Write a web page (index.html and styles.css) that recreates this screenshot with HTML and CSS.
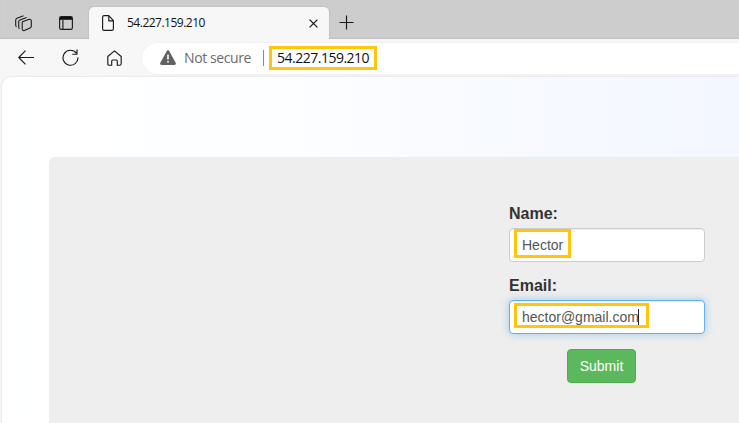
FILE: index.html
```html
<!DOCTYPE html>
<html lang="en">
<head>
<meta charset="utf-8">
<title>54.227.159.210</title>
<link rel="stylesheet" href="styles.css">
</head>
<body>
<div class="browser">
  <header class="tabs">
    <svg class="icon workspaces" width="18" height="18" viewBox="0 0 18 18"><path d="M7.5 6.7 14.2 4.2Q16.3 4 16.3 6V11.2Q16.2 12.5 15 13L9.4 15.5Q7.5 16 7.2 14V8Q7.2 7.2 7.5 6.7ZM4.5 13.8Q3.7 13.3 3.7 12V6.7Q3.7 5.4 5 4.9L11.5 2.4M1.5 11.8Q.7 11.2.7 10V5.1Q.7 3.8 2 3.2L8.5.8"/></svg>
    <svg class="icon tab-menu" width="14" height="14" viewBox="0 0 14 14"><path d="M2.3.6h9.4q1.7 0 1.7 1.7v9.4q0 1.7-1.7 1.7H2.3Q.6 13.4.6 11.7V2.3Q.6.6 2.3.6ZM3.9 4v9"/><path class="solid" d="M1 1h12v2.8H1z"/></svg>
    <div class="tab">
      <svg class="icon page-icon" width="12" height="16" viewBox="0 0 12 16"><path d="M2.1.6h4.7l4.6 5v8.1q0 1.7-1.7 1.7H2.1Q.6 15.4.6 13.7V2.2Q.6.6 2.1.6ZM6.8.8v5h4.4"/></svg>
      <span class="tab-title">54.227.159.210</span>
      <svg class="icon close" width="9" height="9" viewBox="0 0 9 9"><path d="M.6.6 8.4 8.4M8.4.6.6 8.4"/></svg>
    </div>
    <svg class="icon plus" width="15" height="15" viewBox="0 0 15 15"><path d="M7.5 .5v14M.5 7.5h14"/></svg>
  </header>
  <nav class="toolbar">
    <svg class="icon back" width="17" height="15" viewBox="0 0 17 15"><path d="M7.5.7.8 7.5l6.7 6.8M1 7.5h15"/></svg>
    <svg class="icon reload" width="17" height="17" viewBox="0 0 17 17"><path d="M14.4 4.1A7.5 7.5 0 1 0 16 8.4M15 .5v4.7h-4.7"/></svg>
    <svg class="icon home" width="15" height="16" viewBox="0 0 15 16"><path d="M.8 6.5 7.5.9l6.7 5.6v7.2q0 1.5-1.5 1.5h-2.4V11q0-1-1-1H5.7q-1 0-1 1v4.2H2.3Q.8 15.2.8 13.7Z"/></svg>
    <div class="address">
      <svg class="warning" width="16" height="15" viewBox="0 0 16 15"><path class="triangle" d="M7 .8Q8 -.7 9 .8L15.7 12.8Q16.4 14.8 14.5 15H1.5Q-.4 14.8.3 12.8Z"/><path class="mark" d="M7.2 4.5h1.6v5H7.2zM7.2 11h1.6v1.6H7.2z"/></svg>
      <span class="security">Not secure</span>
      <span class="divider"></span>
      <span class="url">54.227.159.210</span>
    </div>
  </nav>
  <main class="page">
    <form class="panel">
      <label class="label" for="name">Name:</label>
      <div class="field" id="name"><span class="mark-box name-box">Hector</span></div>
      <label class="label" for="email">Email:</label>
      <div class="field focused" id="email"><span class="mark-box email-box">hector@gmail.com<i class="caret"></i></span></div>
      <button class="submit" type="button">Submit</button>
    </form>
  </main>
</div>
</body>
</html>
```
FILE: styles.css
```css
* { box-sizing: border-box; }
body { margin: 0; overflow: hidden; background: #f7f7f7; }
.browser { width: 739px; height: 423px; display: flex; flex-direction: column; overflow: hidden; }
.icon { display: block; flex: none; fill: none; stroke: #1b1b1b; stroke-width: 1.15; stroke-linejoin: round; }
.icon .solid { fill: #111; stroke: none; }

.tabs { height: 39px; flex: none; display: flex; background: #cdcdcd; box-shadow: inset 0 -1px 1px #c0c0c0; font-family: "Open Sans", sans-serif; }
.workspaces { margin: 15px 0 0 15px; stroke-width: 1.1; }
.tab-menu { margin: 16px 0 0 26px; }
.tab { width: 240px; height: 33px; margin: 7px 0 0 16px; padding: 0 11px 0 13px; display: flex; align-items: center; background: #f7f7f7; border-radius: 5px 5px 0 0; box-shadow: 0 0 2px #aaa; clip-path: inset(-3px -3px 1px -3px); }
.page-icon { margin-top: -1px; }
.tab-title { margin: -2px 0 0 13px; font-size: 12px; line-height: 16px; letter-spacing: -.5px; color: #111; }
.close { margin-left: auto; stroke-width: 1.3; }
.plus { margin: 15px 0 0 10px; stroke-width: 1.2; }

.toolbar { height: 38px; flex: none; display: flex; align-items: center; padding-left: 18px; background: #f7f7f7; }
.back { margin-top: -1px; }
.reload { margin: -1px 0 0 27px; }
.home { margin: -1px 0 0 28px; }
.address { flex: 1; height: 31px; margin-left: 20px; padding-left: 18px; display: flex; align-items: center; background: #fff; border-radius: 16px 0 0 16px; box-shadow: 0 0 2px #e4e4e4; font-family: "Open Sans", sans-serif; font-size: 14px; }
.warning { flex: none; margin: -1px 8px 0 0; }
.triangle { fill: #616161; }
.mark { fill: #fff; }
.security { width: 79px; flex: none; margin-top: -2px; color: #6b6b6b; letter-spacing: -.4px; white-space: nowrap; }
.divider { width: 1px; height: 16px; background: #8a8a8a; }
.url { width: 108px; height: 24px; margin-left: 5px; padding-left: 5px; border: 3px solid #ffc60b; line-height: 18px; letter-spacing: -.5px; white-space: nowrap; color: #111; }

.page { flex: 1; margin-left: 2px; padding: 80px 0 0 47px; border-radius: 9px 0 0 0; background: linear-gradient(90deg, #fff 0, #fcfeff 280px, #f9fbff 420px, #f3f7ff 739px); box-shadow: 0 0 2px #c8c8c8; }
.panel { height: 100%; padding: 46px 0 0 460px; display: flex; flex-direction: column; align-items: flex-start; background: #eee; border-radius: 6px 0 0 0; font-family: "Liberation Sans", Arial, sans-serif; }
.label { height: 20px; margin-bottom: 5px; font-size: 16px; font-weight: 700; line-height: 22px; color: #333; }
.field { width: 196px; height: 34px; margin-bottom: 13px; padding: 0 0 0 4px; border: 1px solid #ccc; border-radius: 4px; background: #fff; box-shadow: inset 0 1px 1px rgba(0,0,0,.075); font-size: 14px; color: #555; }
.focused { padding-top: 2px; border-color: #66afe9; box-shadow: inset 0 1px 1px rgba(0,0,0,.075), 0 0 8px rgba(102,175,233,.6); }
.mark-box { display: flex; align-items: center; border: 3px solid #ffc60b; padding-left: 5px; }
.name-box { width: 57px; height: 29px; padding-top: 2px; }
.email-box { width: 135px; height: 25px; padding-top: 3px; }
.caret { width: 1px; height: 16px; margin-left: -1px; background: #222; }
.submit { width: 69px; height: 34px; margin: 2px 0 0 58px; padding: 0; border: 1px solid #4cae4c; border-radius: 4px; background: #5cb85c; color: #fff; font: 14px "Liberation Sans", Arial, sans-serif; }
```
